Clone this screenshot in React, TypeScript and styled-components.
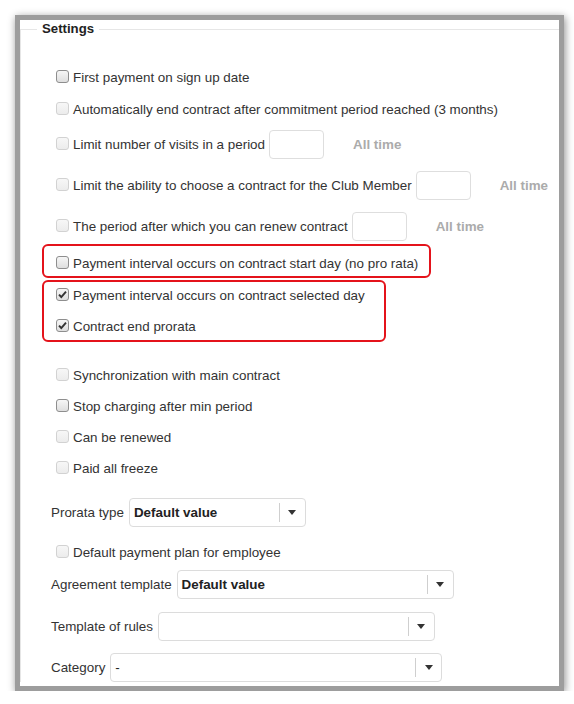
import React from "react";
import styled, { createGlobalStyle } from "styled-components";

const GlobalStyle = createGlobalStyle`
  html, body {
    margin: 0;
    padding: 0;
    background: #fff;
  }
  body {
    font-family: "Liberation Sans", Arial, sans-serif;
    font-size: 13.4px;
    color: #333;
  }
`;

const Frame = styled.div`
  box-sizing: border-box;
  margin: 15px 0 0 15px;
  width: 549px;
  height: 676px;
  padding: 5px;
  background: #9d9d9d;
  box-shadow: 1px 2px 8px rgba(0, 0, 0, 0.45);
`;

const Panel = styled.div`
  height: 100%;
  background: #fff;
  overflow: hidden;
`;

const Fieldset = styled.fieldset`
  margin: 1px 0 0 0;
  padding: 0 0 0 16px;
  border-style: solid;
  border-color: #e6e6e6;
  border-width: 1px 0 0 1px;
  min-width: 0;
`;

const Legend = styled.legend`
  padding: 0 5px;
  font-weight: bold;
  font-size: 13.2px;
  line-height: 16px;
  color: #222;
`;

const Content = styled.div`
  display: flex;
  flex-direction: column;
  align-items: flex-start;
  padding-left: 14px;
`;

const CheckItem = styled.label<{ $mt?: number }>`
  display: flex;
  align-items: flex-start;
  gap: 4px;
  height: 20px;
  line-height: 20px;
  padding-left: 5px;
  margin-top: ${(p) => p.$mt || 0}px;
  white-space: nowrap;
  color: #333;
`;

const Box = styled.span<{ $tone: "dark" | "light" }>`
  box-sizing: border-box;
  flex: none;
  width: 13px;
  height: 13px;
  margin-top: 2px;
  border-radius: 3px;
  border: 1px solid ${(p) => (p.$tone === "dark" ? "#8e8e8e" : "#d2d2d2")};
  background: ${(p) =>
    p.$tone === "dark"
      ? "linear-gradient(#f6f6f6, #dedede)"
      : "linear-gradient(#f7f7f7, #ececec)"};
  display: flex;
  align-items: center;
  justify-content: center;
`;

const InputRow = styled.div<{ $mt: number }>`
  display: flex;
  align-items: center;
  height: 29px;
  margin-top: ${(p) => p.$mt}px;
`;

const TextInput = styled.input`
  box-sizing: border-box;
  width: 55px;
  height: 29px;
  margin: 0 0 0 4px;
  border: 1px solid #dedede;
  border-radius: 4px;
  background: #fff;
`;

const AllTime = styled.span`
  margin-left: 29px;
  font-weight: bold;
  color: #ababab;
`;

const Highlight = styled.div<{ $w: number; $mt: number; $pad: string }>`
  box-sizing: border-box;
  width: ${(p) => p.$w}px;
  margin: ${(p) => p.$mt}px 0 0 -9px;
  padding: ${(p) => p.$pad};
  border: 2px solid #e4131b;
  border-radius: 6px;
  display: flex;
  flex-direction: column;
  gap: 11px;
`;

const FieldRow = styled.div<{ $mt: number }>`
  display: flex;
  align-items: center;
  gap: 5px;
  height: 29px;
  margin-top: ${(p) => p.$mt}px;
  color: #333;
  white-space: nowrap;
`;

const Select = styled.div<{ $w: number }>`
  box-sizing: border-box;
  width: ${(p) => p.$w}px;
  height: 29px;
  border: 1px solid #dcdcdc;
  border-radius: 4px;
  display: flex;
  align-items: center;
  padding-left: 4px;
`;

const SelectValue = styled.span<{ $bold?: boolean }>`
  flex: 1;
  font-weight: ${(p) => (p.$bold ? "bold" : "normal")};
  color: #222;
`;

const Divider = styled.span`
  width: 1px;
  height: 19px;
  background: #cfcfcf;
`;

const Caret = styled.span`
  width: 25px;
  display: flex;
  justify-content: center;
  &::after {
    content: "";
    border-left: 4px solid transparent;
    border-right: 4px solid transparent;
    border-top: 5px solid #333;
  }
`;

type CheckProps = {
  label: string;
  tone?: "dark" | "light";
  checked?: boolean;
  mt?: number;
};

const Check = ({ label, tone = "light", checked, mt }: CheckProps) => (
  <CheckItem $mt={mt}>
    <Box $tone={checked ? "dark" : tone}>
      {checked && (
        <svg width="11" height="11" viewBox="0 0 11 11">
          <path d="M2 5.6 L4.3 8 L9 2.6" fill="none" stroke="#333" strokeWidth="1.9" />
        </svg>
      )}
    </Box>
    {label}
  </CheckItem>
);

const Dropdown = ({ w, value, bold }: { w: number; value: string; bold?: boolean }) => (
  <Select $w={w}>
    <SelectValue $bold={bold}>{value}</SelectValue>
    <Divider />
    <Caret />
  </Select>
);

export default function App() {
  return (
    <>
      <GlobalStyle />
      <Frame>
        <Panel>
          <Fieldset>
            <Legend>Settings</Legend>
            <Content>
              <Check mt={31} tone="dark" label="First payment on sign up date" />
              <Check mt={12} label="Automatically end contract after commitment period reached (3 months)" />
              <InputRow $mt={10}>
                <Check label="Limit number of visits in a period" />
                <TextInput readOnly />
                <AllTime>All time</AllTime>
              </InputRow>
              <InputRow $mt={12}>
                <Check label="Limit the ability to choose a contract for the Club Member" />
                <TextInput readOnly />
                <AllTime>All time</AllTime>
              </InputRow>
              <InputRow $mt={12}>
                <Check label="The period after which you can renew contract" />
                <TextInput readOnly />
                <AllTime>All time</AllTime>
              </InputRow>
              <Highlight $w={389} $mt={3} $pad="8px 0 2px 7px">
                <Check tone="dark" label="Payment interval occurs on contract start day (no pro rata)" />
              </Highlight>
              <Highlight $w={344} $mt={2} $pad="4px 0 3px 7px">
                <Check checked label="Payment interval occurs on contract selected day" />
                <Check checked label="Contract end prorata" />
              </Highlight>
              <Check mt={24} label="Synchronization with main contract" />
              <Check mt={11} tone="dark" label="Stop charging after min period" />
              <Check mt={11} label="Can be renewed" />
              <Check mt={11} label="Paid all freeze" />
              <FieldRow $mt={19}>
                Prorata type
                <Dropdown w={177} value="Default value" bold />
              </FieldRow>
              <Check mt={16} label="Default payment plan for employee" />
              <FieldRow $mt={7}>
                Agreement template
                <Dropdown w={277} value="Default value" bold />
              </FieldRow>
              <FieldRow $mt={13}>
                Template of rules
                <Dropdown w={277} value="" />
              </FieldRow>
              <FieldRow $mt={12}>
                Category
                <Dropdown w={332} value="-" />
              </FieldRow>
            </Content>
          </Fieldset>
        </Panel>
      </Frame>
    </>
  );
}
